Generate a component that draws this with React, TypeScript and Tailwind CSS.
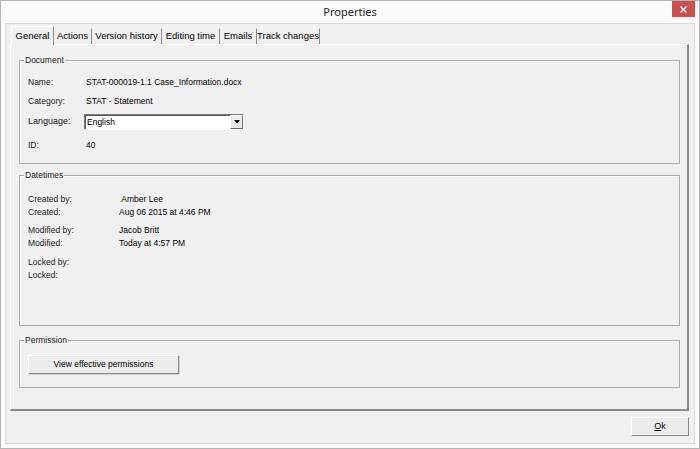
import React from "react";

const body = { fontFamily: '"Liberation Sans", Arial, sans-serif' };
const ui = { fontFamily: '"Noto Sans", "Open Sans", sans-serif' };

const tabs = [
  { label: "General", w: 43 },
  { label: "Actions", w: 38 },
  { label: "Version history", w: 70 },
  { label: "Editing time", w: 58 },
  { label: "Emails", w: 37 },
  { label: "Track changes", w: 63 },
];

function Group({ title, className, children }: { title: string; className: string; children?: React.ReactNode }) {
  return (
    <div className={`relative border border-[#a9a9a9] shadow-[inset_1px_1px_0_#ffffff] ${className}`}>
      <span className="absolute left-[4px] top-[-7px] bg-[#f0f0f0] px-[1px] text-[8.5px] leading-[12px] text-[#222]">
        {title}
      </span>
      {children}
    </div>
  );
}

function Row({ label, value, h, vx = 86, extra = "" }: { label: string; value?: string; h: string; vx?: number; extra?: string }) {
  return (
    <div className={`flex items-center ${h} ${extra}`}>
      <span className="text-[#1a1a1a]" style={{ width: vx - 28 }}>{label}</span>
      {value && <span className="text-black">{value}</span>}
    </div>
  );
}

export default function App() {
  return (
    <div className="flex h-[449px] w-[700px] flex-col border border-[#b4b4b4] bg-[#fbfbfb]" style={body}>
      {/* title bar */}
      <div className="relative flex h-[22px] shrink-0 items-center justify-center">
        <span className="text-[11px] text-[#222]" style={ui}>Properties</span>
        <div className="absolute right-[4px] top-0 flex h-[16px] w-[23px] items-center justify-center bg-[#c75050]">
          <svg width="7" height="7" viewBox="0 0 7 7">
            <path d="M0.5 0.5L6.5 6.5M6.5 0.5L0.5 6.5" stroke="#fff" strokeWidth="1.4" />
          </svg>
        </div>
      </div>

      {/* client */}
      <div className="mx-[4px] flex h-[421px] shrink-0 flex-col border border-[#d9d9d9] bg-[#f0f0f0]">
        {/* tabs */}
        <div className="ml-[5px] mt-[2px] flex h-[18px] items-end text-[9.5px] text-black">
          {tabs.map((t, i) => (
            <div
              key={t.label}
              className={`flex items-center justify-center whitespace-nowrap border-r border-[#8a8a8a] ${
                i === 0
                  ? "relative z-10 h-[19px] border-l border-t border-l-white border-t-white bg-[#f0f0f0] -mb-[1px]"
                  : "h-[16px] border-t border-t-[#f0f0f0]"
              }`}
              style={{ width: t.w }}
            >
              {t.label}
            </div>
          ))}
        </div>

        {/* tab panel */}
        <div className="ml-[4px] flex h-[367px] w-[679px] flex-col border-l border-t border-b-2 border-r-2 border-l-white border-t-white border-b-[#8a8a8a] border-r-[#8a8a8a] px-[8px] pt-[15px] text-[8.5px]">
          <Group title="Document" className="h-[104px] w-[661px] pt-[12px] pl-[8px]">
            <Row label="Name:" value="STAT-000019-1.1 Case_Information.docx" h="h-[19px]" />
            <Row label="Category:" value="STAT - Statement" h="h-[19px]" />
            <div className="flex h-[22px] items-center">
              <span className="w-[56px] text-[9px] text-[#1a1a1a]">Language:</span>
              <div className="flex h-[16px] w-[160px] items-stretch border border-[#7a7a7a] border-b-white border-r-white bg-white">
                <span className="flex flex-1 items-center border-t border-l border-[#5a5a5a] pl-[1px] text-black">English</span>
                <span className="flex w-[13px] items-center justify-center border border-white border-b-[#6a6a6a] border-r-[#6a6a6a] bg-[#ececec]">
                  <svg width="6" height="4" viewBox="0 0 6 4">
                    <path d="M0 0H6L3 3.5Z" fill="#000" />
                  </svg>
                </span>
              </div>
            </div>
            <Row label="ID:" value="40" h="h-[24px]" />
          </Group>

          <Group title="Datetimes" className="mt-[11px] h-[151px] w-[661px] pt-[16px] pl-[8px]">
            <Row label="Created by:" value={"\u00a0Amber Lee"} h="h-[14px]" vx={119} />
            <Row label="Created:" value="Aug 06 2015 at 4:46 PM" h="h-[13px]" vx={119} />
            <Row label="Modified by:" value="Jacob Britt" h="h-[13px]" vx={119} extra="mt-[5px]" />
            <Row label="Modified:" value="Today at 4:57 PM" h="h-[13px]" vx={119} />
            <Row label="Locked by:" h="h-[13px]" vx={119} extra="mt-[6px]" />
            <Row label="Locked:" h="h-[13px]" vx={119} />
          </Group>

          <Group title="Permission" className="mt-[14px] h-[48px] w-[661px] pt-[14px] pl-[8px]">
            <button className="flex h-[19px] w-[151px] items-center justify-center border border-white border-b-[#8a8a8a] border-r-[#8a8a8a] bg-[#ececec] text-[8.5px] text-black shadow-[1px_1px_0_#d0d0d0]">
              View effective permissions
            </button>
          </Group>
        </div>

        {/* footer */}
        <div className="mt-[6px] flex w-[683px] justify-end">
          <button className="flex h-[19px] w-[58px] items-center justify-center border border-white border-b-[#8a8a8a] border-r-[#8a8a8a] bg-[#ececec] text-[9px] text-black">
            <span><span className="underline">O</span>k</span>
          </button>
        </div>
      </div>
    </div>
  );
}
